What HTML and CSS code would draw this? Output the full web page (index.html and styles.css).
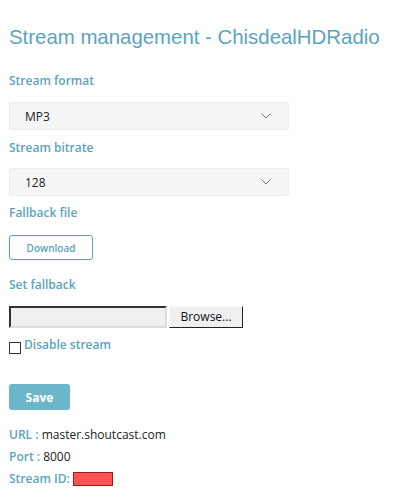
FILE: index.html
```html
<!DOCTYPE html>
<html>
<head>
<meta charset="utf-8">
<link rel="stylesheet" href="styles.css">
</head>
<body>
<h1 class="title">Stream management - ChisdealHDRadio</h1>
<div class="label l-first">Stream format</div>
<div class="select"><span>MP3</span>
<svg class="chev" width="10" height="6" viewBox="0 0 10 6"><path d="M0.5 0.5 L5 5 L9.5 0.5" fill="none" stroke="#777" stroke-width="1"/></svg></div>
<div class="label l-mid">Stream bitrate</div>
<div class="select"><span>128</span>
<svg class="chev" width="10" height="6" viewBox="0 0 10 6"><path d="M0.5 0.5 L5 5 L9.5 0.5" fill="none" stroke="#777" stroke-width="1"/></svg></div>
<div class="label l-mid2">Fallback file</div>
<div class="dl-row"><button class="btn-outline">Download</button></div>
<div class="label l-set">Set fallback</div>
<div class="file-row"><div class="file-box"></div><div class="browse">Browse...</div></div>
<div class="check-row"><span class="checkbox"></span><span class="check-label">Disable stream</span></div>
<div class="save-row"><button class="btn-save">Save</button></div>
<div class="info"><span class="key">URL :</span> master.shoutcast.com</div>
<div class="info"><span class="key">Port :</span> 8000</div>
<div class="info"><span class="key">Stream ID:</span> <span class="redbox"></span></div>
</body>
</html>
```
FILE: styles.css
```css
html, body { margin: 0; padding: 0; background: #fff; }
body { padding: 0 9px; font-family: "Open Sans", sans-serif; color: #222; }
.title {
  margin: 25px 0 0;
  font-family: "Liberation Sans", Arial, sans-serif;
  font-weight: normal;
  font-size: 20.4px;
  line-height: 24px;
  color: #5ba4be;
}
.label {
  font-size: 12px;
  line-height: 16px;
  font-weight: 600;
  color: #5ca3bc;
}
.l-first { margin-top: 24px; margin-bottom: 13px; }
.l-mid { margin-top: 10px; margin-bottom: 12px; }
.l-mid2 { margin-top: 9px; margin-bottom: 14px; }
.l-set { margin-top: 17px; margin-bottom: 13px; }
.select {
  height: 26px;
  background: #f5f5f5;
  border: 1px solid #ececec;
  border-radius: 2px;
  display: flex;
  align-items: center;
  justify-content: space-between;
  padding: 0 17px 0 15px;
  box-sizing: content-box;
  width: 246px;
  font-size: 12px;
  color: #222;
}
.chev { display: block; }
.dl-row { display: flex; }
.btn-outline {
  width: 84px;
  height: 25px;
  border: 1px solid #5ba4be;
  border-radius: 3px;
  background: #fff;
  color: #5a9fb6;
  font-family: "Open Sans", sans-serif;
  font-weight: 600;
  font-size: 10px;
  padding: 0;
}
.file-row { display: flex; gap: 2px; height: 22px; }
.file-box {
  width: 154px;
  height: 18px;
  background: #f0f0f0;
  border: 2px solid;
  border-color: #333 #ddd #ddd #333;
}
.browse {
  width: 72px;
  height: 20px;
  background: #f0f0f0;
  border: 1px solid;
  border-color: #f8f8f8 #222 #222 #f8f8f8;
  font-family: "Open Sans", sans-serif;
  font-size: 12px;
  line-height: 20px;
  text-align: center;
  color: #111;
}
.check-row { display: flex; align-items: flex-end; margin-top: 10px; height: 16px; }
.checkbox {
  width: 10px; height: 10px;
  border: 1px solid #333;
  background: #fff;
  margin-right: 3px;
}
.check-label {
  font-size: 12px;
  font-weight: 600;
  color: #5ca3bc;
  line-height: 16px;
  position: relative; top: -1px;
}
.save-row { margin-top: 30px; display: flex; margin-bottom: 14px; }
.btn-save {
  width: 61px;
  height: 26px;
  background: #6bb6c9;
  border: none;
  border-radius: 3px;
  color: #fff;
  font-family: "Open Sans", sans-serif;
  font-weight: 700;
  font-size: 12px;
  padding: 0;
}
.info {
  font-size: 12px;
  line-height: 22px;
  color: #222;
}
.key { color: #5ca3bc; font-weight: 600; }
.redbox {
  display: inline-block;
  width: 38px;
  height: 12px;
  background: #ff5252;
  border: 1px solid #8b2020;
  vertical-align: -3px;
}
```
